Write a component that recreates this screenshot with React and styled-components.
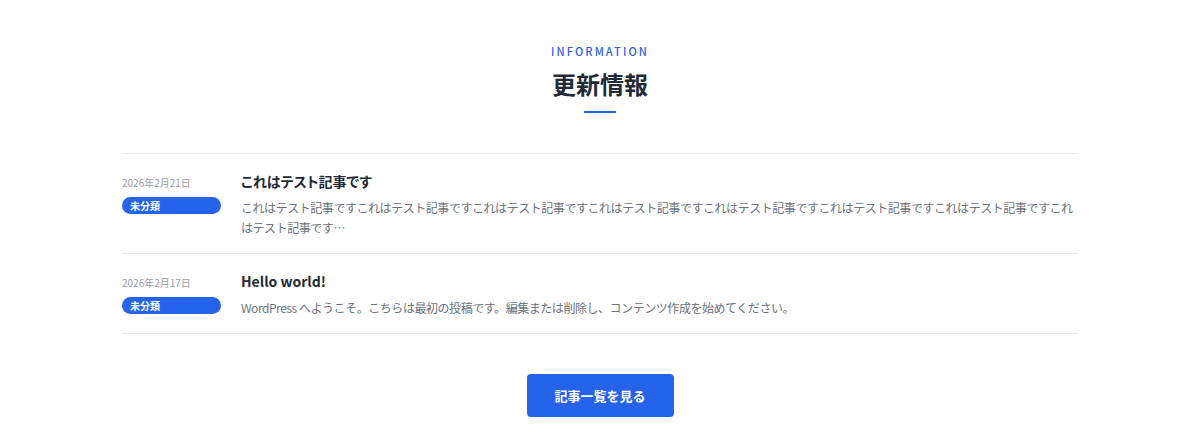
import React from "react";
import styled, { createGlobalStyle } from "styled-components";

const GlobalStyle = createGlobalStyle`
  body {
    margin: 0;
    background: #ffffff;
    font-family: "Noto Sans CJK JP", "Noto Sans", sans-serif;
    color: #1f2937;
  }
`;

const Section = styled.section`
  padding: 44px 0 26px;
`;

const Header = styled.div`
  display: flex;
  flex-direction: column;
  align-items: center;
`;

const Eyebrow = styled.span`
  color: #2f62de;
  font-size: 11px;
  font-weight: 500;
  letter-spacing: 2.1px;
  line-height: 14px;
`;

const Heading = styled.h2`
  margin: 10px 0 0;
  font-size: 24px;
  font-weight: 700;
  line-height: 32px;
  color: #1f2937;
`;

const Bar = styled.div`
  width: 32px;
  height: 2px;
  margin-top: 11px;
  background: #2563eb;
`;

const List = styled.ul`
  list-style: none;
  margin: 40px auto 0;
  padding: 0;
  width: 956px;
  border-top: 1px solid #e5e7eb;
`;

const Item = styled.li`
  display: flex;
  gap: 20px;
  padding: 16px 0 15px;
  border-bottom: 1px solid #e5e7eb;
`;

const Meta = styled.div`
  width: 99px;
  flex-shrink: 0;
  display: flex;
  flex-direction: column;
  gap: 7px;
  padding-top: 6px;
`;

const Date = styled.span`
  font-size: 10px;
  line-height: 14px;
  color: #9a9ea6;
`;

const Badge = styled.span`
  display: block;
  height: 17px;
  line-height: 17px;
  padding: 0 8px;
  border-radius: 9px;
  background: #2563eb;
  color: #ffffff;
  font-size: 10px;
  font-weight: 700;
`;

const Body = styled.div`
  flex: 1;
  min-width: 0;
`;

const Title = styled.h3`
  margin: 0;
  font-size: 14px;
  font-weight: 700;
  line-height: 22px;
  color: #1f2937;
  font-feature-settings: "palt";
`;

const Excerpt = styled.p`
  margin: 6px 0 0;
  font-size: 12px;
  line-height: 20px;
  letter-spacing: -0.45px;
  color: #6b7280;
`;

const Footer = styled.div`
  display: flex;
  justify-content: center;
  margin-top: 40px;
`;

const Button = styled.a`
  display: flex;
  align-items: center;
  justify-content: center;
  width: 147px;
  height: 43px;
  border-radius: 4px;
  background: #2563eb;
  color: #ffffff;
  font-size: 13px;
  font-weight: 700;
  text-decoration: none;
`;

const posts = [
  {
    date: "2026年2月21日",
    category: "未分類",
    title: "これはテスト記事です",
    excerpt:
      "これはテスト記事ですこれはテスト記事ですこれはテスト記事ですこれはテスト記事ですこれはテスト記事ですこれはテスト記事ですこれはテスト記事ですこれはテスト記事です…",
  },
  {
    date: "2026年2月17日",
    category: "未分類",
    title: "Hello world!",
    excerpt:
      "WordPress へようこそ。こちらは最初の投稿です。編集または削除し、コンテンツ作成を始めてください。",
  },
];

const App = () => {
  return (
    <>
      <GlobalStyle />
      <Section>
        <Header>
          <Eyebrow>INFORMATION</Eyebrow>
          <Heading>更新情報</Heading>
          <Bar />
        </Header>

        <List>
          {posts.map((post) => (
            <Item key={post.date}>
              <Meta>
                <Date>{post.date}</Date>
                <Badge>{post.category}</Badge>
              </Meta>
              <Body>
                <Title>{post.title}</Title>
                <Excerpt>{post.excerpt}</Excerpt>
              </Body>
            </Item>
          ))}
        </List>

        <Footer>
          <Button href="#">記事一覧を見る</Button>
        </Footer>
      </Section>
    </>
  );
};

export default App;
